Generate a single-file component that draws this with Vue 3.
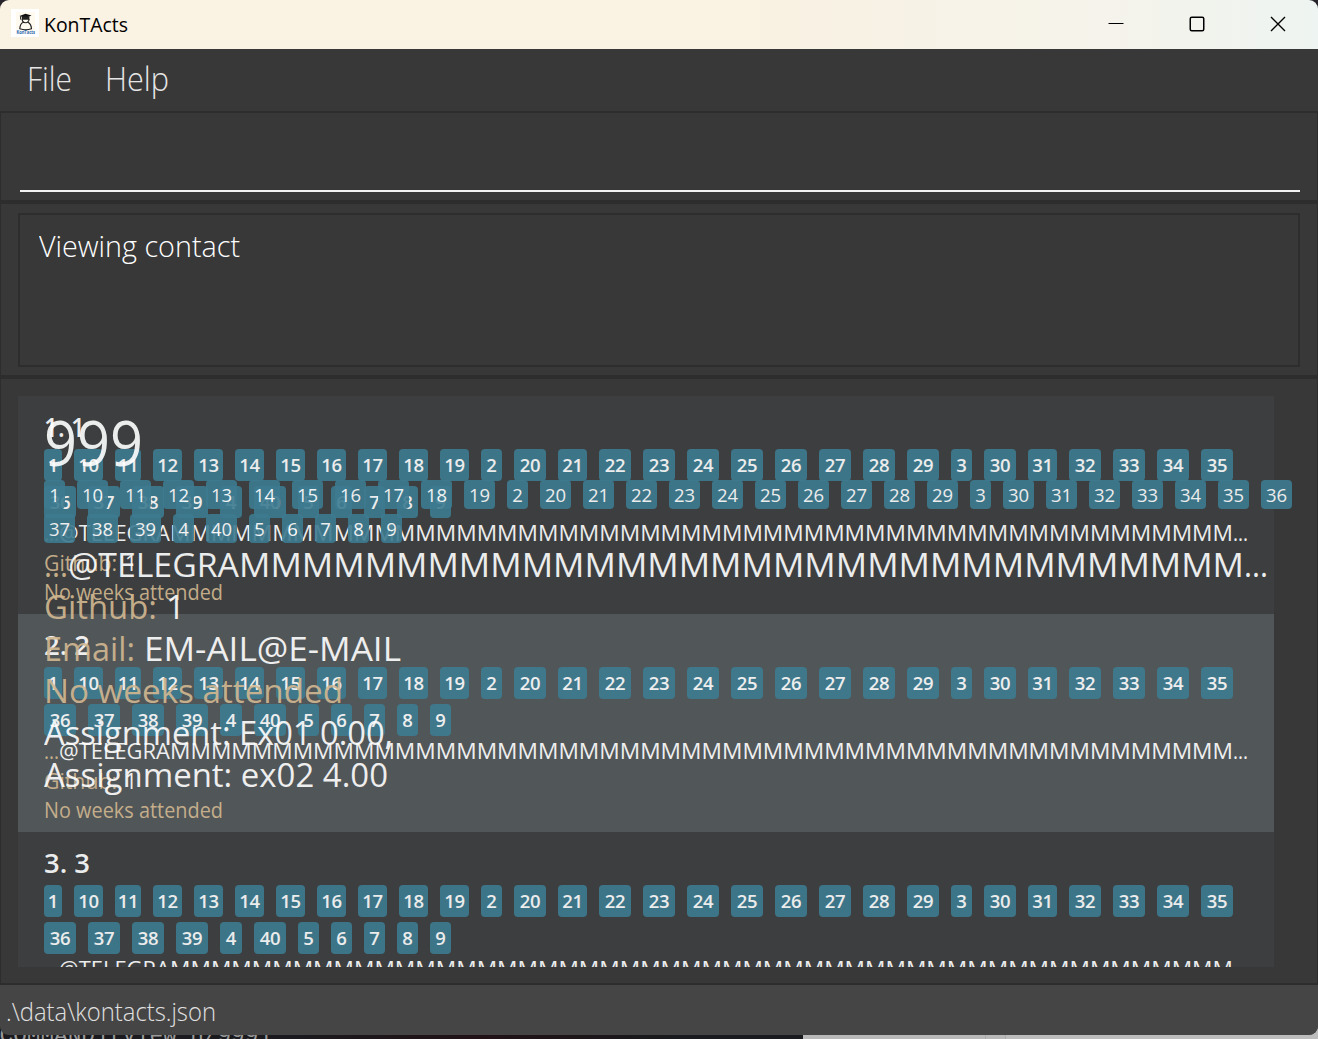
<script setup>
const smallWidth = (t) => {
  if (t === '1') return 18
  if (t === '4') return 22
  if (t.length === 1) return 21
  if (t === '11') return 26
  return t.includes('1') ? 29 : 32
}
const largeWidth = (t) => (t.length === 1 ? 21 : 31)

const tags = Array.from({ length: 40 }, (_, i) => String(i + 1)).sort()
const people = [1, 2, 3]
const smallTail = 'M'.repeat(52)
const largeTail = 'M'.repeat(32)

// Scales a run of text horizontally so that it fills the given width.
const vFit = {
  mounted(el, { value }) {
    el.style.display = 'inline-block'
    el.style.whiteSpace = 'pre'
    const natural = el.getBoundingClientRect().width
    el.style.transformOrigin = '0 50%'
    el.style.transform = `scaleX(${value / natural})`
    el.style.marginRight = `${value - natural}px`
  },
}
</script>

<template>
  <div class="desktop">
    <div class="behind">
      <div class="terminal"><span>[COMMAND][View n/999]</span></div>
      <div class="pane"></div>
      <div class="pane narrow"></div>
      <div class="pane rest"></div>
    </div>
    <div class="window">
      <header class="titlebar">
        <svg class="logo" width="28" height="28" viewBox="0 0 28 28">
          <rect width="28" height="28" fill="#fff" />
          <rect x="5" y="3" width="19" height="22" fill="#fffaf0" />
          <path d="M8.5 7 14.5 4.8 20.5 6.6 14.8 8.9Z" fill="#111" />
          <path d="M10.8 7.5v3.2h7.6V7.5" fill="#222" />
          <path d="M9.6 7.2v3.4" stroke="#222" stroke-width="1" />
          <path d="M11.2 10c0 5 6.8 5 6.8 0M12.2 13.2c-2.6 1.2-3.2 3.8-3.4 6.5 3.5 1.3 8.2 1.3 11.7 0-.2-2.7-1-5.300-3.600-6.500" fill="none" stroke="#222" stroke-width="1.2" />
          <text x="5.500" y="25.200" font-size="4.500" font-weight="700" textLength="18.500" lengthAdjust="spacingAndGlyphs" fill="#2466b5">KonTacts</text>
        </svg>
        <span class="title"><span v-fit="84">KonTActs</span></span>
        <div class="controls">
          <svg width="16" height="16" viewBox="0 0 16 16"><path d="M0.500 7.500h15" stroke="#000" stroke-width="1" /></svg>
          <svg width="16" height="16" viewBox="0 0 16 16"><rect x="1.250" y="1.250" width="13.500" height="13.500" rx="1.500" fill="none" stroke="#000" stroke-width="1.500" /></svg>
          <svg width="16" height="16" viewBox="0 0 16 16"><path d="M1 1 15 15M15 1 1 15" stroke="#000" stroke-width="1.400" /></svg>
        </div>
      </header>

      <nav class="menu">
        <span class="file"><span v-fit="45">File</span></span>
        <span class="help"><span v-fit="64">Help</span></span>
      </nav>

      <section class="command"><div class="input"></div></section>

      <section class="result">
        <div class="message"><span v-fit="201">Viewing contact</span></div>
      </section>

      <main class="content">
        <div class="list">
          <article v-for="n in people" :key="n" class="card" :class="{ even: n === 2 }">
            <div class="name"><span v-fit="n === 1 ? 41 : 46">{{ n }}. {{ n }}</span></div>
            <div class="tags">
              <span v-for="t in tags" :key="t" class="tag" :style="{ width: smallWidth(t) + 'px' }">{{ t }}</span>
            </div>
            <div class="line handle"><i v-fit="15" class="tan">...</i><span v-fit="111">@TELEGRA</span><span v-fit="1063">{{ smallTail }}</span><span v-fit="15">...</span></div>
            <div class="line github"><i v-fit="73" class="tan">Github:</i><span class="one">1</span></div>
            <div class="line"><i v-fit="179" class="tan">No weeks attended</i></div>
          </article>
        </div>

        <div class="detail">
          <div class="number"><span v-fit="99">999</span></div>
          <div class="tags wide">
            <span v-for="t in tags" :key="t" class="tag" :style="{ width: largeWidth(t) + 'px' }">{{ t }}</span>
          </div>
          <div class="rows">
            <div class="row"><i v-fit="24" class="tan dots">...</i><span v-fit="171">@TELEGRA</span><span v-fit="1005">{{ largeTail }}</span><span v-fit="24">...</span></div>
            <div class="row"><i v-fit="113" class="tan">Github:</i><span class="value one">1</span></div>
            <div class="row"><i v-fit="91" class="tan">Email:</i><span class="value"><span v-fit="257">EM-AIL@E-MAIL</span></span></div>
            <div class="row"><i v-fit="299" class="tan">No weeks attended</i></div>
            <div class="row"><span v-fit="349">Assignment: Ex01 0.00,</span></div>
            <div class="row"><span v-fit="344">Assignment: ex02 4.00</span></div>
          </div>
        </div>
      </main>

      <footer class="status"><span v-fit="210">.\data\kontacts.json</span></footer>
    </div>
  </div>
</template>

<style>
html, body { margin: 0; overflow: hidden; background: #1b181d; }
</style>

<style scoped>
* { box-sizing: border-box; }
i { font-style: normal; }
.desktop {
  position: relative;
  width: 1318px;
  height: 1039px;
  overflow: hidden;
  background: #28242c;
  font-family: "Open Sans", "Noto Sans", sans-serif;
}
.behind {
  position: absolute;
  left: 0;
  bottom: 0;
  width: 100%;
  height: 19px;
  display: flex;
}
.terminal {
  width: 803px;
  background: linear-gradient(90deg, #1b1b1f, #1b1b1f 35%, #211216 60%, #191b1e 85%);
  color: #999;
  font: 22.700px/26px "Liberation Mono", monospace;
  white-space: pre;
  overflow: hidden;
}
.terminal span { display: block; margin: 3px 0 0 -14px; }
.pane { width: 183px; background: #b9b9b9; border-right: 1px solid #aaa; }
.pane.narrow { width: 20px; }
.pane.rest { flex: 1; border: 0; background: #bdbdbd; }
.window {
  position: relative;
  height: 1035px;
  display: flex;
  flex-direction: column;
  border-radius: 9px;
  overflow: hidden;
  background: #383838;
}
.titlebar {
  height: 49px;
  flex: none;
  display: flex;
  align-items: center;
  padding-left: 11px;
  background: linear-gradient(90deg, #faf2e2, #faf2e2 55%, #f5f3eb 84%, #eef4f1);
}
.logo { margin-bottom: 3px; }
.title { margin-left: 5px; font-size: 20px; line-height: 28px; color: #000; }
.controls { display: flex; gap: 65px; margin: 0 32px 2px auto; }
.menu {
  height: 62px;
  flex: none;
  display: flex;
  font-size: 33.500px;
  font-weight: 300;
  line-height: 59px;
  color: #e6e6e6;
}
.file { margin-left: 27px; }
.help { margin-left: 33px; }
.command {
  height: 91px;
  flex: none;
  border: 2px solid #2d2d2d;
  border-width: 2px 1px;
  padding: 0 17px 0 19px;
}
.input { height: 79px; border-bottom: 2px solid #f2f2f2; }
.result {
  height: 175px;
  flex: none;
  border: 2px solid #2d2d2d;
  border-width: 2px 1px;
  padding: 9px 17px;
}
.message {
  height: 154px;
  border: 2px solid #2d2d2d;
  padding: 12px 19px;
  font-size: 28.500px;
  font-weight: 300;
  line-height: 39px;
  color: #fff;
}
.content {
  position: relative;
  height: 608px;
  flex: none;
  border: 2px solid #2d2d2d;
  border-width: 2px 1px;
  padding: 17px 0 0 17px;
  color: #fff;
}
.list { width: 1256px; height: 571px; overflow: hidden; }
.card { height: 218px; padding: 14px 26px 0; background: #3c3e3f; white-space: nowrap; }
.card.even { background: #515658; }
.name { height: 39px; font-size: 27.500px; font-weight: 600; line-height: 34px; opacity: .9; }
.tags { display: flex; flex-wrap: wrap; gap: 5px 12px; width: 1216px; }
.tag {
  height: 32px;
  border-radius: 4px;
  background: #3e7b91;
  opacity: .9;
  font-size: 18.500px;
  font-weight: 600;
  line-height: 32px;
  text-align: center;
  letter-spacing: -.3px;
}
.line { height: 29px; font-size: 21px; line-height: 29px; opacity: .9; display: flex; }
.handle { height: 30px; font-size: 21.500px; }
.github { margin-top: 1px; }
.one { margin-left: 8px; }
.tan { color: #d2b891; }
.detail { position: absolute; left: 43px; top: 15px; width: 1260px; }
.number { height: 86px; font-size: 62px; line-height: 96px; opacity: .9; }
.wide { width: 1256px; }
.wide .tag { height: 29px; line-height: 29px; font-weight: 400; font-size: 18.500px; letter-spacing: 0; }
.rows { margin-top: 0; }
.row { height: 42px; font-size: 33.500px; line-height: 42px; opacity: .9; display: flex; white-space: nowrap; }
.value { margin-left: 9px; }
.status {
  height: 50px;
  flex: none;
  padding-left: 6px;
  background: #454545;
  color: #e0e0e0;
  font-size: 25px;
  font-weight: 300;
  line-height: 53px;
}
</style>
